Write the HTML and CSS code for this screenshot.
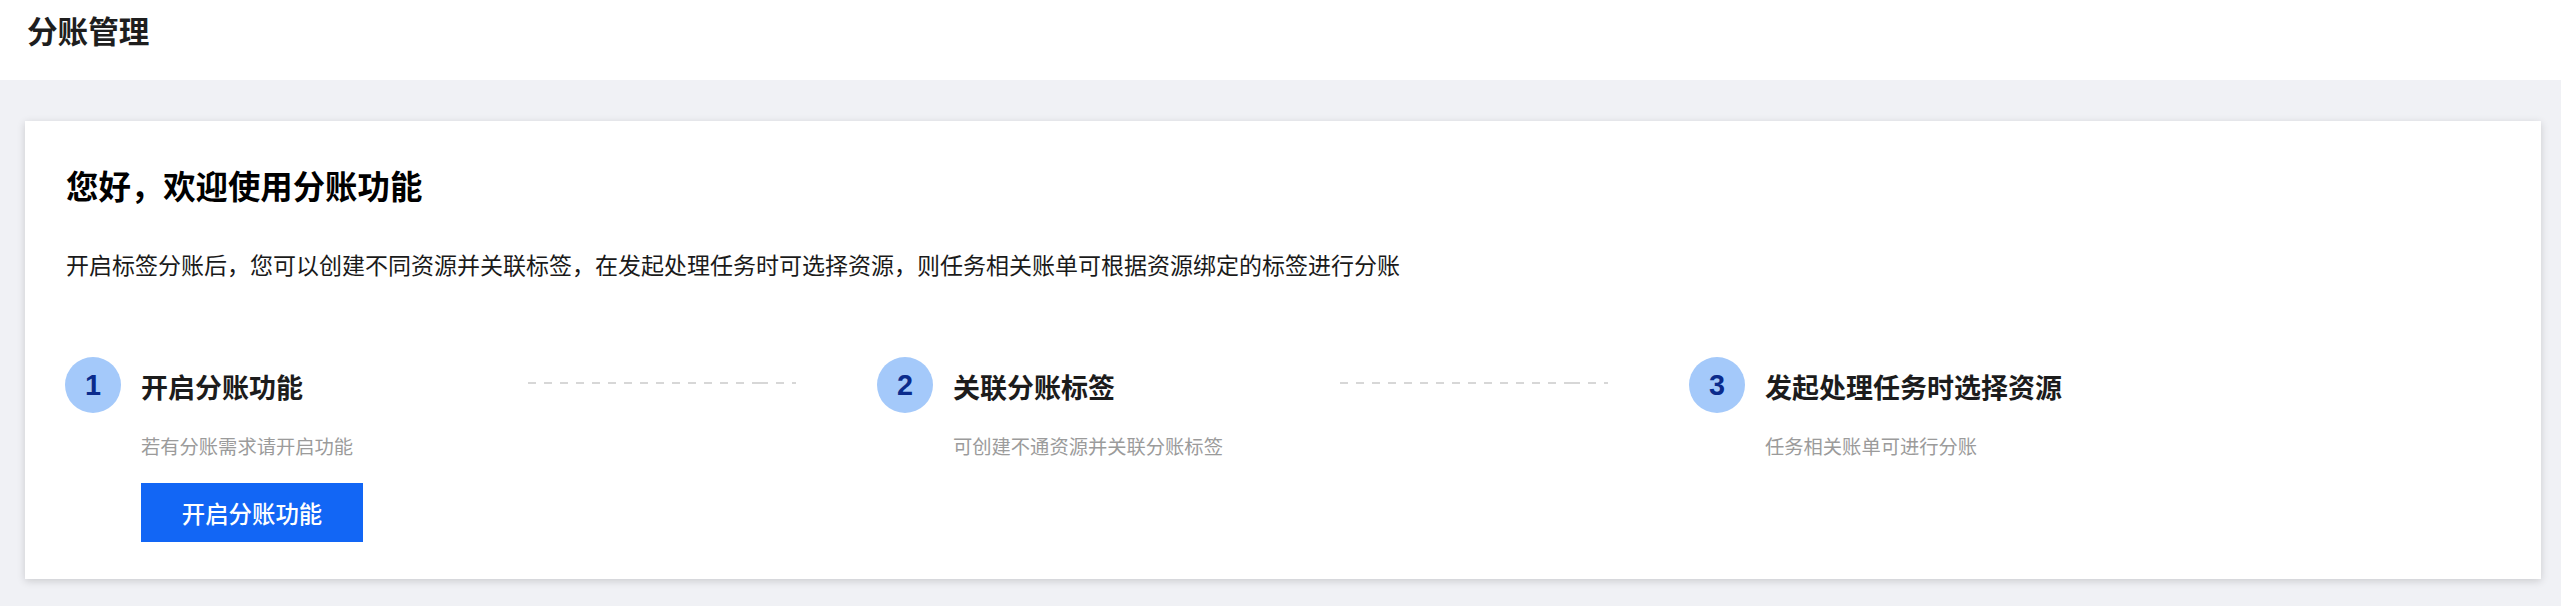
FILE: index.html
```html
<!DOCTYPE html>
<html lang="zh-CN">
<head>
<meta charset="utf-8">
<title>分账管理</title>
<link rel="stylesheet" href="styles.css">
</head>
<body>
<header class="topbar">
  <h1 class="page-title">分账管理</h1>
</header>
<main class="content">
  <section class="card">
    <h2 class="card-title">您好，欢迎使用分账功能</h2>
    <p class="card-desc">开启标签分账后，您可以创建不同资源并关联标签，在发起处理任务时可选择资源，则任务相关账单可根据资源绑定的标签进行分账</p>
    <div class="steps">
      <div class="step">
        <div class="step-head">
          <span class="step-num">1</span>
          <span class="step-title">开启分账功能</span>
          <span class="step-line"></span>
        </div>
        <p class="step-sub">若有分账需求请开启功能</p>
        <button class="btn-primary" type="button">开启分账功能</button>
      </div>
      <div class="step">
        <div class="step-head">
          <span class="step-num">2</span>
          <span class="step-title">关联分账标签</span>
          <span class="step-line"></span>
        </div>
        <p class="step-sub">可创建不通资源并关联分账标签</p>
      </div>
      <div class="step">
        <div class="step-head">
          <span class="step-num">3</span>
          <span class="step-title">发起处理任务时选择资源</span>
        </div>
        <p class="step-sub">任务相关账单可进行分账</p>
      </div>
    </div>
  </section>
</main>
</body>
</html>
```
FILE: styles.css
```css
* {
  box-sizing: border-box;
}

html, body {
  margin: 0;
  padding: 0;
}

body {
  background: #f0f1f5;
  font-family: "Noto Sans CJK SC", "Noto Sans", sans-serif;
  color: #1f1f1f;
  min-height: 606px;
}

.topbar {
  background: #ffffff;
  height: 80px;
  padding-left: 27px;
}

.page-title {
  margin: 0;
  font-size: 30.6px;
  line-height: 61px;
  font-weight: 700;
  color: #1e1e1e;
}

.content {
  padding: 41px 20px 26px 25px;
}

.card {
  background: #ffffff;
  box-shadow: 0 2px 8px rgba(0, 0, 0, 0.16);
  padding: 42px 40px 37px 40px;
}

.card-title {
  margin: 0;
  font-size: 32.4px;
  line-height: 44px;
  font-weight: 700;
  color: #000000;
  padding-left: 1px;
}

.card-desc {
  margin: 40px 0 0 0;
  font-size: 23px;
  line-height: 34px;
  color: #1a1a1a;
  padding-left: 1px;
}

.steps {
  display: grid;
  grid-template-columns: repeat(3, 1fr);
  margin-top: 76px;
}

.step {
  display: flex;
  flex-direction: column;
  align-items: flex-start;
}

.step-head {
  display: flex;
  align-items: center;
  width: 100%;
  height: 56px;
}

.step-num {
  flex: none;
  width: 56px;
  height: 56px;
  border-radius: 50%;
  background: #a4c9fa;
  color: #0b2b8c;
  font-family: "Liberation Sans", Arial, sans-serif;
  font-weight: 700;
  font-size: 28.8px;
  display: flex;
  align-items: center;
  justify-content: center;
}

.step-title {
  margin-left: 20px;
  font-size: 27px;
  line-height: 56px;
  font-weight: 700;
  color: #1c1c1c;
  padding-top: 4px;
}

.step-line {
  flex: none;
  width: 268px;
  height: 2px;
  margin-left: auto;
  margin-right: 81px;
  margin-bottom: 5px;
  background:
    linear-gradient(#d7d7d7, #d7d7d7) 224px 0 / 16px 2px no-repeat,
    repeating-linear-gradient(to right, #d7d7d7 0 8px, transparent 8px 16px) 0 0 / 224px 2px no-repeat,
    repeating-linear-gradient(to right, #d7d7d7 0 8px, transparent 8px 16px) 248px 0 / 20px 2px no-repeat;
}

.step-sub {
  margin: 18px 0 0 76px;
  font-size: 19.3px;
  line-height: 30px;
  color: #9b9b9b;
}

.btn-primary {
  margin: 22px 0 0 76px;
  width: 222px;
  height: 59px;
  border: none;
  border-radius: 0;
  background: #1266f5;
  color: #ffffff;
  font-family: "Noto Sans CJK SC", sans-serif;
  font-size: 23.4px;
  font-weight: 500;
  padding: 0;
  cursor: pointer;
}
```
